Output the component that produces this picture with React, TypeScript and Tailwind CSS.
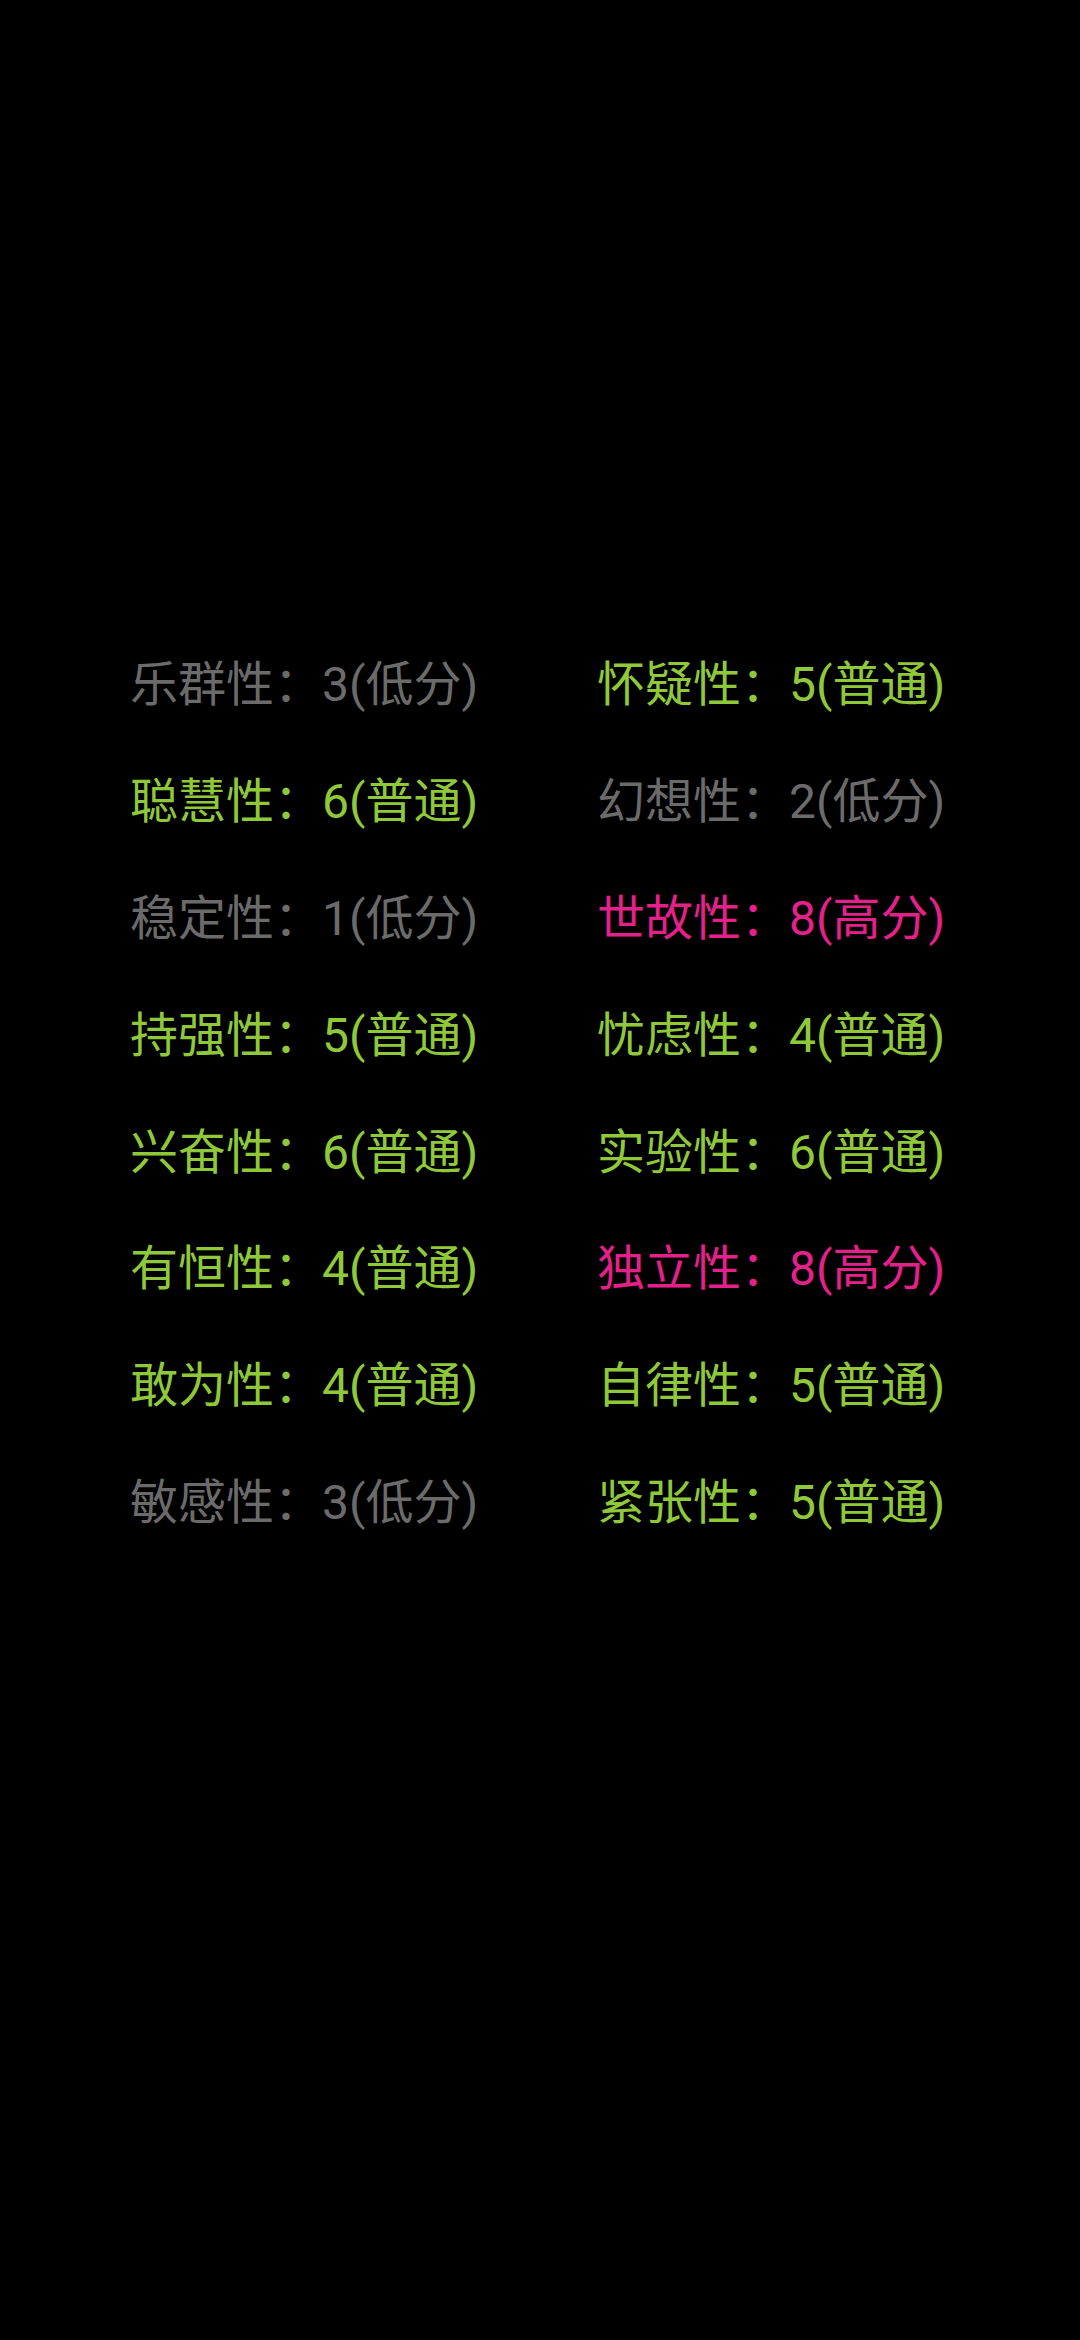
const traits = [
  { name: "乐群性", score: 3, level: "低分" },
  { name: "怀疑性", score: 5, level: "普通" },
  { name: "聪慧性", score: 6, level: "普通" },
  { name: "幻想性", score: 2, level: "低分" },
  { name: "稳定性", score: 1, level: "低分" },
  { name: "世故性", score: 8, level: "高分" },
  { name: "持强性", score: 5, level: "普通" },
  { name: "忧虑性", score: 4, level: "普通" },
  { name: "兴奋性", score: 6, level: "普通" },
  { name: "实验性", score: 6, level: "普通" },
  { name: "有恒性", score: 4, level: "普通" },
  { name: "独立性", score: 8, level: "高分" },
  { name: "敢为性", score: 4, level: "普通" },
  { name: "自律性", score: 5, level: "普通" },
  { name: "敏感性", score: 3, level: "低分" },
  { name: "紧张性", score: 5, level: "普通" },
];

const levelColor: Record<string, string> = {
  低分: "text-[#6b6b6b]",
  普通: "text-[#8fc93a]",
  高分: "text-[#e4218b]",
};

export default function App() {
  return (
    <div
      className="min-h-[2340px] w-[1080px] bg-black pt-[627px] pl-[130px]"
      style={{ fontFamily: '"Roboto", "Noto Sans CJK SC", sans-serif' }}
    >
      <div className="grid grid-cols-[467px_auto]">
        {traits.map((t) => (
          <div
            key={t.name}
            className={`flex h-[116.8px] items-center text-[48px] leading-none whitespace-nowrap ${levelColor[t.level]}`}
          >
            {t.name}：{t.score}({t.level})
          </div>
        ))}
      </div>
    </div>
  );
}
